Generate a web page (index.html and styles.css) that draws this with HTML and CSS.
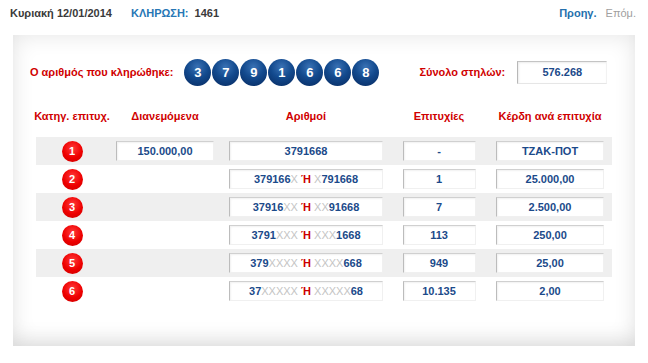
FILE: index.html
```html
<!DOCTYPE html>
<html lang="el">
<head>
<meta charset="utf-8">
<link rel="stylesheet" href="styles.css">
</head>
<body>
<div class="topbar">
  <div class="left">
    <span class="date">Κυριακή 12/01/2014</span>
    <span class="draw-label">ΚΛΗΡΩΣΗ:</span>
    <span class="draw-no">1461</span>
  </div>
  <div class="nav">
    <span class="prev">Προηγ.</span>
    <span class="next">Επόμ.</span>
  </div>
</div>
<div class="panel">
  <div class="drawn">
    <span class="red-label">Ο αριθμός που κληρώθηκε:</span>
    <div class="balls">
      <span class="ball">3</span><span class="ball">7</span><span class="ball">9</span><span class="ball">1</span><span class="ball">6</span><span class="ball">6</span><span class="ball">8</span>
    </div>
    <span class="red-label total-label">Σύνολο στηλών:</span>
    <span class="total-box">576.268</span>
  </div>
  <div class="grid head">
    <div>Κατηγ. επιτυχ.</div>
    <div>Διανεμόμενα</div>
    <div>Αριθμοί</div>
    <div>Επιτυχίες</div>
    <div>Κέρδη ανά επιτυχία</div>
  </div>
  <div class="grid row band">
    <div><span class="cat">1</span></div>
    <div><span class="box w-dist">150.000,00</span></div>
    <div><span class="box w-num">3791668</span></div>
    <div><span class="box w-win">-</span></div>
    <div><span class="box w-prize">ΤΖΑΚ-ΠΟΤ</span></div>
  </div>
  <div class="grid row">
    <div><span class="cat">2</span></div>
    <div></div>
    <div><span class="box w-num"><span class="mask">379166<i>X</i> <b>Ή</b> <i>X</i>791668</span></span></div>
    <div><span class="box w-win">1</span></div>
    <div><span class="box w-prize">25.000,00</span></div>
  </div>
  <div class="grid row band">
    <div><span class="cat">3</span></div>
    <div></div>
    <div><span class="box w-num"><span class="mask">37916<i>XX</i> <b>Ή</b> <i>XX</i>91668</span></span></div>
    <div><span class="box w-win">7</span></div>
    <div><span class="box w-prize">2.500,00</span></div>
  </div>
  <div class="grid row">
    <div><span class="cat">4</span></div>
    <div></div>
    <div><span class="box w-num"><span class="mask">3791<i>XXX</i> <b>Ή</b> <i>XXX</i>1668</span></span></div>
    <div><span class="box w-win">113</span></div>
    <div><span class="box w-prize">250,00</span></div>
  </div>
  <div class="grid row band">
    <div><span class="cat">5</span></div>
    <div></div>
    <div><span class="box w-num"><span class="mask">379<i>XXXX</i> <b>Ή</b> <i>XXXX</i>668</span></span></div>
    <div><span class="box w-win">949</span></div>
    <div><span class="box w-prize">25,00</span></div>
  </div>
  <div class="grid row">
    <div><span class="cat">6</span></div>
    <div></div>
    <div><span class="box w-num"><span class="mask">37<i>XXXXX</i> <b>Ή</b> <i>XXXXX</i>68</span></span></div>
    <div><span class="box w-win">10.135</span></div>
    <div><span class="box w-prize">2,00</span></div>
  </div>
</div>
</body>
</html>
```
FILE: styles.css
```css
* { box-sizing: border-box; }
body {
  margin: 0;
  background: #fff;
  font-family: "Liberation Sans", Arial, sans-serif;
  font-size: 11px;
  font-weight: bold;
  color: #333;
  white-space: nowrap;
}
.topbar {
  height: 26px;
  display: flex;
  align-items: center;
  justify-content: space-between;
  padding: 0 12px 0 10px;
}
.left { display: flex; align-items: center; }
.date { color: #3a3a3a; }
.draw-label { color: #2777b5; margin-left: 19px; }
.draw-no { color: #3a3a3a; margin-left: 6px; }
.nav { display: flex; gap: 9px; }
.prev { color: #2470ad; }
.next { color: #a0a0a0; font-weight: normal; }

.panel {
  margin: 9px 0 0 13px;
  width: 622px;
  height: 311px;
  background: #fff;
  box-shadow: inset 0 0 22px rgba(0,0,0,0.11), inset 0 -18px 22px -12px rgba(0,0,0,0.08);
  padding: 23px 23px 0 23px;
}
.drawn {
  display: flex;
  align-items: center;
  height: 28px;
  margin-left: -6px;
}
.red-label { color: #d00000; flex: none; }
.balls { display: flex; gap: 1px; margin-left: 11px; flex: none; }
.ball {
  width: 27px;
  height: 27px;
  border-radius: 50%;
  display: flex;
  align-items: center;
  justify-content: center;
  color: #fff;
  font-size: 13px;
  background: radial-gradient(circle at 50% 30%, #3a72b5 0%, #134a8e 45%, #0b3570 80%, #082a5c 100%);
}
.total-label { margin-left: 40px; }
.total-box {
  flex: none;
  margin-left: 12px;
  width: 90px;
  height: 23px;
  display: flex;
  align-items: center;
  justify-content: center;
  color: #1b4a8a;
  background: #fff;
  border: 1px solid #e6e6e6;
  border-top-color: #c4c4c4;
  border-left-color: #b8b8b8;
  border-right-color: #f2f2f2;
  box-shadow: inset 1px 1px 2px rgba(0,0,0,0.08);
}
.grid {
  display: grid;
  grid-template-columns: 72px 114px 168px 98px 124px;
  align-items: center;
  justify-items: center;
}
.head {
  margin-top: 20px;
  height: 20px;
  margin-bottom: 11px;
  color: #d00000;
}
.row { height: 28px; }
.band { background: #efefef; }
.cat {
  width: 21px;
  height: 21px;
  border-radius: 50%;
  display: flex;
  align-items: center;
  justify-content: center;
  color: #fff;
  background: radial-gradient(circle at 50% 35%, #ff3a3a 0%, #ee0000 55%, #c80000 100%);
}
.box {
  height: 20px;
  display: flex;
  align-items: center;
  justify-content: center;
  color: #1b4a8a;
  background: #fff;
  border: 1px solid #f0f0f0;
  border-top-color: #d0d0d0;
  border-left-color: #bcbcbc;
  box-shadow: inset 1px 1px 2px rgba(0,0,0,0.06);
}
.mask { white-space: pre; }
.w-dist { width: 98px; }
.w-num { width: 154px; }
.w-win { width: 73px; }
.w-prize { width: 108px; }
.box i { font-style: normal; font-weight: normal; color: #c4c4c4; }
.box b { color: #cc0000; }
```
